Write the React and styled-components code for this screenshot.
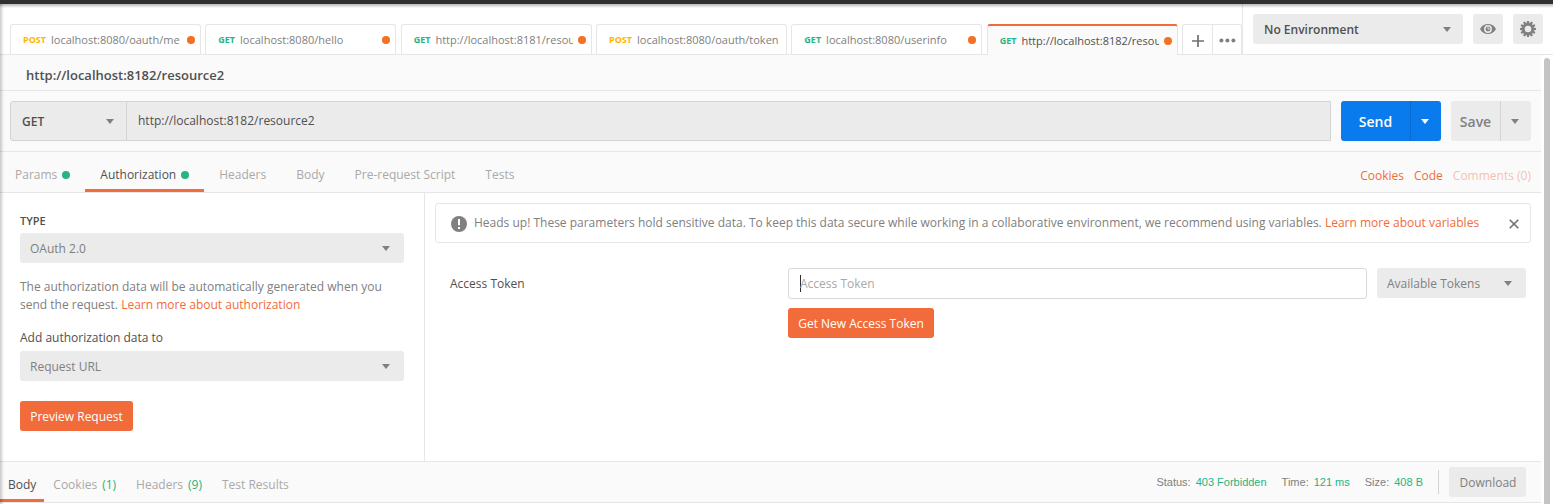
import React from 'react';
import styled, { createGlobalStyle, css } from 'styled-components';

const Global = createGlobalStyle`
  * { box-sizing: border-box; }
  body {
    margin: 0;
    background: #fff;
    color: #505050;
    font: 12px/18px 'Open Sans', 'Noto Sans', sans-serif;
    overflow: hidden;
  }
  button, input { font: inherit; color: inherit; border: 0; margin: 0; padding: 0; background: none; }
`;

const Window = styled.div`
  position: relative;
  width: 1553px;
  height: 504px;
  overflow: hidden;
  border-top: 4px solid #303030;
  &::before {
    content: '';
    position: absolute;
    inset: 0 0 auto 0;
    height: 4px;
    background: linear-gradient(rgba(0, 0, 0, 0.28), rgba(0, 0, 0, 0));
  }
  &::after {
    content: '';
    position: absolute;
    inset: 0 auto 0 0;
    width: 4px;
    background: linear-gradient(90deg, rgba(0, 0, 0, 0.2), rgba(0, 0, 0, 0));
  }
`;

const Header = styled.header`
  display: flex;
  height: 51px;
  border-bottom: 1px solid #e6e6e6;
`;

const TabStrip = styled.nav`
  display: flex;
  align-items: flex-start;
  gap: 4.4px;
  width: 1243px;
  padding: 20px 0 0 10px;
  border-right: 1px solid #e6e6e6;
`;

const RequestTab = styled.div`
  display: flex;
  align-items: center;
  width: 191px;
  height: ${(p) => (p.$active ? 31 : 30)}px;
  padding: ${(p) => (p.$active ? '1px' : '0')} 5px 0 12px;
  border: 1px solid #e6e6e6;
  border-bottom: 0;
  border-radius: 3px 3px 0 0;
  color: ${(p) => (p.$active ? '#505050' : '#808080')};
  background: ${(p) => (p.$active ? '#fafafa' : '#fff')};
  ${(p) => p.$active && css`border-top: 2px solid #f26b3a;`}
`;

const Method = styled.span`
  font-size: 9px;
  font-weight: 700;
  margin-right: 5px;
  color: ${(p) => (p.$post ? '#ffb400' : '#26b47f')};
`;

const TabUrl = styled.span`
  flex: 1;
  font-size: 11px;
  white-space: nowrap;
  overflow: hidden;
  margin-right: ${(p) => (p.$wide ? 0 : 5)}px;
`;

const Dot = styled.i`
  width: 8px;
  height: 8px;
  border-radius: 50%;
  flex: none;
  background: ${(p) => (p.$green ? '#26b47f' : '#f47023')};
`;

const TabActions = styled.div`
  display: flex;
  width: 60px;
  height: 30px;
  border: 1px solid #e6e6e6;
  border-bottom: 0;
  border-radius: 3px 3px 0 0;
`;

const TabAction = styled.button`
  display: flex;
  align-items: center;
  justify-content: center;
  flex: 1;
  padding: 2px 0 0 1px;
  & + & { border-left: 1px solid #e6e6e6; }
`;

const Environment = styled.div`
  display: flex;
  gap: 10px;
  padding: 10px;
`;

const IconButton = styled.button`
  display: flex;
  align-items: center;
  justify-content: center;
  width: 30px;
  height: 30px;
  border-radius: 3px;
  background: #ebebeb;
`;

const Select = styled.div`
  display: flex;
  align-items: center;
  justify-content: space-between;
  width: ${(p) => p.$width}px;
  height: 30px;
  padding: ${(p) => (p.$strong ? '1px 12px 0 11px' : '1px 14px 0 10px')};
  border-radius: 3px;
  background: #ebebeb;
  color: ${(p) => (p.$strong ? '#505050' : '#808080')};
  font-weight: ${(p) => (p.$strong ? 600 : 400)};
`;

const Caret = styled.i`
  border: 4px solid transparent;
  border-top: 5px solid ${(p) => p.$color || '#808080'};
  border-bottom: 0;
`;

const Content = styled.main`
  width: 1541px;
`;

const RequestName = styled.h1`
  height: 36px;
  margin: 0;
  padding: 11px 26px 0;
  background: #fafafa;
  border-bottom: 1px solid #e6e6e6;
  font-size: 13px;
  font-weight: 600;
  line-height: 18px;
`;

const UrlRow = styled.div`
  display: flex;
  gap: 10px;
  height: 61px;
  padding: 10px;
  background: #fafafa;
  border-bottom: 1px solid #e6e6e6;
`;

const UrlBox = styled.div`
  display: flex;
  width: 1321px;
  height: 40px;
  border: 1px solid #d4d4d4;
  border-radius: 3px 0 0 3px;
  background: #ebebeb;
`;

const MethodSelect = styled.div`
  display: flex;
  align-items: center;
  justify-content: space-between;
  width: 116px;
  padding: 1px 12px 0 11px;
  border-right: 1px solid #d4d4d4;
  font-weight: 600;
`;

const UrlText = styled.div`
  padding: 10px 11px;
`;

const SplitButton = styled.div`
  display: flex;
  height: 40px;
  border-radius: 3px;
  overflow: hidden;
  font-size: 14px;
  font-weight: 600;
  color: ${(p) => (p.$primary ? '#fff' : '#808080')};
  background: ${(p) => (p.$primary ? '#097bed' : '#ebebeb')};
  button { display: flex; align-items: center; justify-content: center; }
  button:first-child { width: ${(p) => (p.$primary ? 69 : 49)}px; padding-top: 2px; font-weight: 600; }
  button:last-child {
    width: 31px;
    padding-right: 2px;
    border-left: 1px solid ${(p) => (p.$primary ? '#076bcf' : '#d4d4d4')};
  }
`;

const SectionTabs = styled.nav`
  display: flex;
  justify-content: space-between;
  height: 41px;
  background: #fafafa;
  border-bottom: 1px solid #e6e6e6;
`;

const TabGroup = styled.div`
  display: flex;
`;

const SectionTab = styled.div`
  display: flex;
  align-items: center;
  gap: 5px;
  height: 40px;
  padding: 8px 15px 0;
  color: ${(p) => (p.$active ? '#505050' : '#a9a9a9')};
  border-bottom: 3px solid ${(p) => (p.$active ? '#f26b3a' : 'transparent')};
`;

const RequestLinks = styled.div`
  display: flex;
  gap: 10px;
  padding: 15px 10px 0;
`;

const Link = styled.a`
  color: #f26b3a;
  opacity: ${(p) => (p.$disabled ? 0.4 : 1)};
`;

const AuthPanel = styled.section`
  display: flex;
  height: 269px;
  border-bottom: 1px solid #e6e6e6;
`;

const AuthSettings = styled.div`
  width: 425px;
  padding: 19px 20px 0;
  border-right: 1px solid #e6e6e6;
`;

const FieldLabel = styled.div`
  font-size: ${(p) => (p.$caps ? 11 : 12)}px;
  font-weight: ${(p) => (p.$caps ? 600 : 400)};
  margin-bottom: ${(p) => (p.$caps ? 3 : 4)}px;
`;

const Help = styled.p`
  margin: 15px 0;
  color: #808080;
`;

const OrangeButton = styled.button`
  display: flex;
  align-items: center;
  justify-content: center;
  width: ${(p) => p.$width}px;
  height: 30px;
  padding-top: 1px;
  border-radius: 3px;
  color: #fff;
  background: #f26b3a;
`;

const PreviewSlot = styled.div`
  margin-top: 20px;
`;

const AuthDetails = styled.div`
  flex: 1;
  padding: 10px 10px 0;
`;

const Notice = styled.div`
  display: flex;
  align-items: center;
  height: 40px;
  padding: 1px 11px 0 15px;
  border: 1px solid #e6e6e6;
  border-radius: 3px;
  color: #808080;
`;

const NoticeText = styled.span`
  flex: 1;
  padding: 0 0 1px 7px;
`;

const TokenRow = styled.div`
  display: flex;
  align-items: flex-start;
  padding: 25px 5px 0 15px;
`;

const TokenLabel = styled.label`
  width: 338px;
  padding-top: 7px;
`;

const TokenField = styled.div`
  width: 579px;
  margin-right: 10px;
`;

const TokenInput = styled.div`
  display: flex;
  align-items: center;
  height: 31px;
  margin-bottom: 9px;
  padding: 0 11px;
  border: 1px solid #d9d9d9;
  border-radius: 3px;
  color: #a9a9a9;
`;

const TextCursor = styled.i`
  width: 1px;
  height: 17px;
  margin-right: -1px;
  background: #303030;
`;

const ResponseBar = styled.footer`
  display: flex;
  justify-content: space-between;
  height: 41px;
  background: #fafafa;
  border-bottom: 1px solid #e6e6e6;
`;

const ResponseTab = styled.div`
  display: flex;
  gap: 5px;
  align-items: center;
  height: 40px;
  padding: 8px ${(p) => (p.$active ? 8 : 11)}px 0 ${(p) => (p.$active ? 8 : 9)}px;
  color: ${(p) => (p.$active ? '#505050' : '#a9a9a9')};
  border-bottom: 3px solid ${(p) => (p.$active ? '#f26b3a' : 'transparent')};
`;

const Green = styled.span`
  color: #26b47f;
`;

const ResponseMeta = styled.div`
  display: flex;
  align-items: center;
  padding-right: 15px;
  font: 11px/18px 'Liberation Sans', Arial, sans-serif;
  color: #808080;
`;

const Stat = styled.span`
  margin-right: 15px;
  ${Green} { margin-left: 5px; }
`;

const Divider = styled.i`
  width: 1px;
  height: 24px;
  margin-right: 10px;
  background: #d4d4d4;
`;

const Download = styled.button`
  width: 77px;
  height: 30px;
  padding: 1px 0 0 1px;
  border-radius: 3px;
  background: #ebebeb;
  font: 12px/29px 'Open Sans', sans-serif;
`;

const Scrollbar = styled.div`
  position: absolute;
  top: 54px;
  right: 3px;
  bottom: -6px;
  width: 6px;
  border-radius: 3px;
  background: #c4c4c4;
`;

const PlusIcon = () => (
  <svg width="12" height="12" viewBox="0 0 12 12" stroke="#707070" strokeWidth="1.7">
    <path d="M6 0v12M0 6h12" />
  </svg>
);

const MoreIcon = () => (
  <svg width="17" height="5" viewBox="0 0 17 5" fill="#808080">
    <circle cx="2.4" cy="2.5" r="2" />
    <circle cx="8.4" cy="2.5" r="2" />
    <circle cx="14.4" cy="2.5" r="2" />
  </svg>
);

const EyeIcon = () => (
  <svg width="16" height="10" viewBox="0 0 16 10">
    <path d="M0 5C1.8 1.8 4.6 0 8 0s6.200 1.800 8 5c-1.800 3.200-4.600 5-8 5S1.800 8.200 0 5z" fill="#808080" />
    <circle cx="8" cy="5" r="3.200" fill="none" stroke="#ebebeb" strokeWidth="1.500" />
    <path d="M8 5V3M8 5h1.800" stroke="#ebebeb" strokeWidth="0.900" />
  </svg>
);

const GearIcon = () => (
  <svg width="16" height="16" viewBox="-8 -8 16 16" fill="#808080">
    {Array.from({ length: 12 }, (_, i) => (
      <path key={i} d="M-1.500-5L-1-8H1L1.500-5z" transform={`rotate(${i * 30})`} />
    ))}
    <circle r="4.700" fill="none" stroke="#808080" strokeWidth="2.800" />
  </svg>
);

const AlertIcon = () => (
  <svg width="16" height="16" viewBox="0 0 16 16">
    <circle cx="8" cy="8" r="8" fill="#808080" />
    <path d="M8 3v6.200M8 11v2" stroke="#fff" strokeWidth="2" />
  </svg>
);

const CloseIcon = () => (
  <svg width="10" height="10" viewBox="0 0 10 10" stroke="#707070" strokeWidth="1.600">
    <path d="M.7.7l8.600 8.600M9.300.7L.7 9.300" />
  </svg>
);

const requests = [
  { method: 'POST', url: 'localhost:8080/oauth/me', dirty: true },
  { method: 'GET', url: 'localhost:8080/hello', dirty: true },
  { method: 'GET', url: 'http://localhost:8181/resource', dirty: true },
  { method: 'POST', url: 'localhost:8080/oauth/token' },
  { method: 'GET', url: 'localhost:8080/userinfo', dirty: true },
  { method: 'GET', url: 'http://localhost:8182/resource2', dirty: true, active: true },
];

const sections = [
  { name: 'Params', set: true },
  { name: 'Authorization', set: true, active: true },
  { name: 'Headers' },
  { name: 'Body' },
  { name: 'Pre-request Script' },
  { name: 'Tests' },
];

export default function App() {
  return (
    <Window>
      <Global />
      <Header>
        <TabStrip>
          {requests.map((r) => (
            <RequestTab key={r.url} $active={r.active}>
              <Method $post={r.method === 'POST'}>{r.method}</Method>
              <TabUrl $wide={!r.dirty}>{r.url}</TabUrl>
              {r.dirty && <Dot />}
            </RequestTab>
          ))}
          <TabActions>
            <TabAction><PlusIcon /></TabAction>
            <TabAction><MoreIcon /></TabAction>
          </TabActions>
        </TabStrip>
        <Environment>
          <Select $width={210} $strong>No Environment<Caret /></Select>
          <IconButton><EyeIcon /></IconButton>
          <IconButton><GearIcon /></IconButton>
        </Environment>
      </Header>
      <Content>
        <RequestName>http://localhost:8182/resource2</RequestName>
        <UrlRow>
          <UrlBox>
            <MethodSelect>GET<Caret /></MethodSelect>
            <UrlText>http://localhost:8182/resource2</UrlText>
          </UrlBox>
          <SplitButton $primary>
            <button>Send</button>
            <button><Caret $color="#fff" /></button>
          </SplitButton>
          <SplitButton>
            <button>Save</button>
            <button><Caret /></button>
          </SplitButton>
        </UrlRow>
        <SectionTabs>
          <TabGroup>
            {sections.map((s) => (
              <SectionTab key={s.name} $active={s.active}>
                {s.name}
                {s.set && <Dot $green />}
              </SectionTab>
            ))}
          </TabGroup>
          <RequestLinks>
            <Link>Cookies</Link>
            <Link>Code</Link>
            <Link $disabled>Comments (0)</Link>
          </RequestLinks>
        </SectionTabs>
        <AuthPanel>
          <AuthSettings>
            <FieldLabel $caps>TYPE</FieldLabel>
            <Select $width={384}>OAuth 2.0<Caret /></Select>
            <Help>
              The authorization data will be automatically generated when you send the request.{' '}
              <Link>Learn more about authorization</Link>
            </Help>
            <FieldLabel>Add authorization data to</FieldLabel>
            <Select $width={384}>Request URL<Caret /></Select>
            <PreviewSlot>
              <OrangeButton $width={113}>Preview Request</OrangeButton>
            </PreviewSlot>
          </AuthSettings>
          <AuthDetails>
            <Notice>
              <AlertIcon />
              <NoticeText>
                Heads up! These parameters hold sensitive data. To keep this data secure while working in a
                collaborative environment, we recommend using variables. <Link>Learn more about variables</Link>
              </NoticeText>
              <CloseIcon />
            </Notice>
            <TokenRow>
              <TokenLabel>Access Token</TokenLabel>
              <TokenField>
                <TokenInput><TextCursor />Access Token</TokenInput>
                <OrangeButton $width={146}>Get New Access Token</OrangeButton>
              </TokenField>
              <Select $width={149}>Available Tokens<Caret /></Select>
            </TokenRow>
          </AuthDetails>
        </AuthPanel>
        <ResponseBar>
          <TabGroup>
            <ResponseTab $active>Body</ResponseTab>
            <ResponseTab>Cookies <Green>(1)</Green></ResponseTab>
            <ResponseTab>Headers <Green>(9)</Green></ResponseTab>
            <ResponseTab>Test Results</ResponseTab>
          </TabGroup>
          <ResponseMeta>
            <Stat>Status:<Green>403 Forbidden</Green></Stat>
            <Stat>Time:<Green>121 ms</Green></Stat>
            <Stat>Size:<Green>408 B</Green></Stat>
            <Divider />
            <Download>Download</Download>
          </ResponseMeta>
        </ResponseBar>
      </Content>
      <Scrollbar />
    </Window>
  );
}
